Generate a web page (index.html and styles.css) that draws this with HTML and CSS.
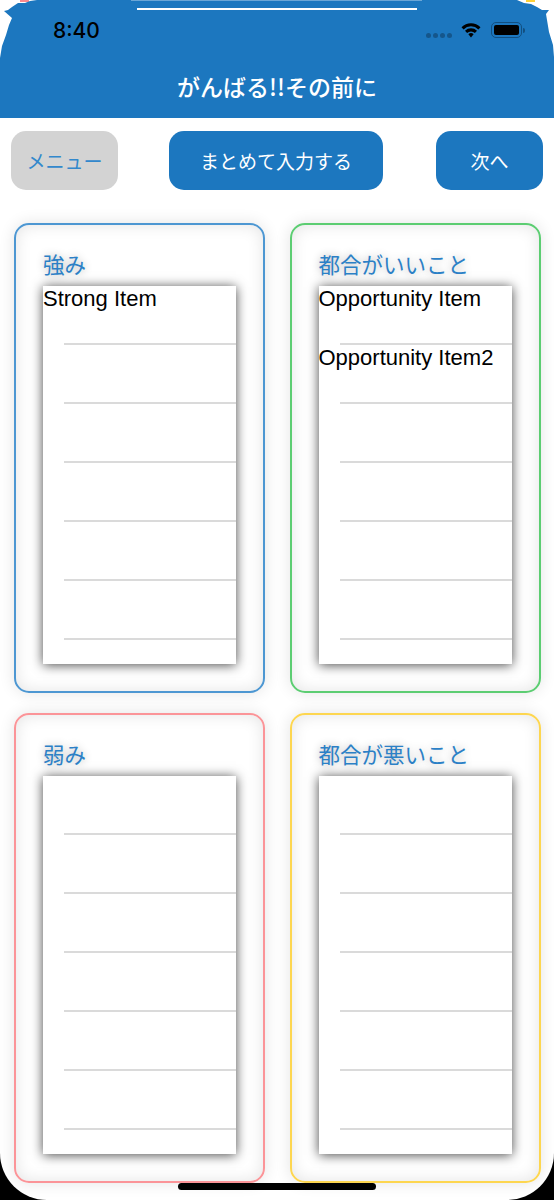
FILE: index.html
```html
<!DOCTYPE html>
<html lang="ja">

<head>
    <meta charset="UTF-8">
    <meta name="viewport" content="width=device-width, initial-scale=1.0">
    <title>がんばる!!その前に</title>
    <link rel="stylesheet" href="styles.css">
</head>

<body>
    <div class="screen">
        <span class="corner-bit corner-bit-pink"></span>
        <span class="corner-bit corner-bit-yellow"></span>

        <!-- Header -->
        <header class="header">
            <div class="top-band"></div>
            <div class="top-line"></div>
            <div class="status-bar">
                <span class="clock">8:40</span>
                <div class="status-icons">
                    <div class="signal-dots"><i></i><i></i><i></i><i></i></div>
                    <svg class="wifi" viewBox="0 0 20 16" width="22" height="16">
                        <path d="M0.5 5.2 A13.5 13.5 0 0 1 19.5 5.2 L17.4 7.4 A10.5 10.5 0 0 0 2.6 7.4 Z" />
                        <path d="M4 8.8 A8.6 8.6 0 0 1 16 8.8 L13.9 11 A5.6 5.6 0 0 0 6.100 11 Z" />
                        <path d="M7.400 12.300 A3.800 3.800 0 0 1 12.600 12.300 L10 15.500 Z" />
                    </svg>
                    <div class="battery"><div class="battery-fill"></div></div>
                    <div class="battery-tip"></div>
                </div>
            </div>
            <h1 class="title">がんばる!!その前に</h1>
        </header>

        <!-- Buttons -->
        <nav class="toolbar">
            <button class="btn btn-menu">メニュー</button>
            <button class="btn btn-bulk">まとめて入力する</button>
            <button class="btn btn-next">次へ</button>
        </nav>

        <!-- Four boxes -->
        <main class="grid">
            <section class="card card-blue">
                <h2 class="card-title">強み</h2>
                <div class="list">
                    <div class="row"><span class="item">Strong Item</span><div class="rule"></div></div>
                    <div class="row"><div class="rule"></div></div>
                    <div class="row"><div class="rule"></div></div>
                    <div class="row"><div class="rule"></div></div>
                    <div class="row"><div class="rule"></div></div>
                    <div class="row"><div class="rule"></div></div>
                </div>
            </section>

            <section class="card card-green">
                <h2 class="card-title">都合がいいこと</h2>
                <div class="list">
                    <div class="row"><span class="item">Opportunity Item</span><div class="rule"></div></div>
                    <div class="row"><span class="item">Opportunity Item2</span><div class="rule"></div></div>
                    <div class="row"><div class="rule"></div></div>
                    <div class="row"><div class="rule"></div></div>
                    <div class="row"><div class="rule"></div></div>
                    <div class="row"><div class="rule"></div></div>
                </div>
            </section>

            <section class="card card-pink">
                <h2 class="card-title">弱み</h2>
                <div class="list">
                    <div class="row"><div class="rule"></div></div>
                    <div class="row"><div class="rule"></div></div>
                    <div class="row"><div class="rule"></div></div>
                    <div class="row"><div class="rule"></div></div>
                    <div class="row"><div class="rule"></div></div>
                    <div class="row"><div class="rule"></div></div>
                </div>
            </section>

            <section class="card card-yellow">
                <h2 class="card-title">都合が悪いこと</h2>
                <div class="list">
                    <div class="row"><div class="rule"></div></div>
                    <div class="row"><div class="rule"></div></div>
                    <div class="row"><div class="rule"></div></div>
                    <div class="row"><div class="rule"></div></div>
                    <div class="row"><div class="rule"></div></div>
                    <div class="row"><div class="rule"></div></div>
                </div>
            </section>
        </main>

        <div class="home-bar"></div>
    </div>
</body>

</html>
```

FILE: styles.css
```css
/* General */
html {
    background-color: #000;
}

body {
    margin: 0;
    font-family: "Noto Sans CJK JP", "Noto Sans", sans-serif;
}

.screen {
    position: relative;
    width: 554px;
    height: 1200px;
    overflow: hidden;
    background-color: #fff;
    border-radius: 0 0 47px 47px;
}

.corner-bit {
    position: absolute;
    top: 0;
    width: 9px;
    height: 2px;
}

.corner-bit-pink {
    left: 20px;
    background-color: #fb8a8e;
}

.corner-bit-yellow {
    left: 526px;
    background-color: #fdd13a;
}

/* Header */
.header {
    position: relative;
    display: flex;
    flex-direction: column;
    height: 118px;
    background-color: #1c77bf;
    clip-path: polygon(0 58px, 2px 46px, 6px 35px, 9px 25px, 12px 18px, 4px 11px, 8px 10px, 12px 7px, 18px 3px, 25px 3px, 30px 1px, 37px 0,
        517px 0, 524px 3px, 531px 4px, 537px 7px, 542px 10px, 549px 10px, 546px 14px, 547px 20px, 549px 32px, 553px 45px, 554px 57px, 554px 118px, 0 118px);
}

.top-band {
    position: absolute;
    top: 0;
    left: 131px;
    width: 291px;
    height: 1px;
    background-color: #6ba6d6;
}

.top-line {
    position: absolute;
    top: 8px;
    left: 137px;
    width: 280px;
    height: 2px;
    background-color: #fff;
}

.status-bar {
    display: flex;
    justify-content: space-between;
    align-items: flex-start;
    padding: 17px 29px 0 53px;
}

.clock {
    font-family: Inter, "Liberation Sans", sans-serif;
    font-size: 21px;
    line-height: 28px;
    font-weight: 500;
    color: #000;
}

.status-icons {
    display: flex;
    align-items: center;
    padding-top: 5px;
}

.signal-dots {
    display: flex;
    gap: 2px;
    margin-top: 11px;
    margin-right: 8px;
}

.signal-dots i {
    width: 5px;
    height: 5px;
    border-radius: 50%;
    background-color: #15568b;
}

.wifi {
    margin-right: 9px;
    fill: #000;
}

.battery {
    box-sizing: border-box;
    width: 31px;
    height: 16px;
    padding: 2px;
    border: 1.500px solid #124f80;
    border-radius: 5px;
}

.battery-fill {
    height: 100%;
    border-radius: 2px;
    background-color: #000;
}

.battery-tip {
    width: 2px;
    height: 5px;
    margin-left: 1px;
    border-radius: 0 2px 2px 0;
    background-color: #124f80;
}

.title {
    margin: 25px 0 0;
    text-align: center;
    font-size: 23px;
    line-height: 32px;
    font-weight: 500;
    color: #fff;
}

/* Buttons */
.toolbar {
    display: flex;
    justify-content: space-between;
    padding: 13px 11px 0;
}

.btn {
    height: 59px;
    padding: 0;
    border: none;
    border-radius: 15px;
    font-family: inherit;
    font-size: 19px;
    color: #fff;
    background-color: #1c77bf;
}

.btn-menu {
    width: 107px;
    color: #3288cc;
    background-color: #d3d3d3;
}

.btn-bulk {
    width: 214px;
    margin-right: 2px;
}

.btn-next {
    width: 107px;
}

/* Four boxes */
.grid {
    display: grid;
    grid-template-columns: 251px 251px;
    grid-auto-rows: 470px;
    column-gap: 24.500px;
    row-gap: 20px;
    padding: 33px 0 0 14px;
}

.card {
    box-sizing: border-box;
    padding: 23px 27px 0;
    border: 2px solid #3a8ccc;
    border-radius: 15px;
    box-shadow: 0 0 16px rgba(0, 0, 0, 0.11), inset 0 0 16px rgba(0, 0, 0, 0.11);
}

.card-blue {
    border-color: #4d97d2;
}

.card-green {
    border-color: #5ccd72;
}

.card-pink {
    border-color: #fb9498;
}

.card-yellow {
    border-color: #fdd650;
}

.card-title {
    margin: 0 0 7px;
    font-size: 21.500px;
    line-height: 31px;
    font-weight: 400;
    color: #2b80c6;
    text-shadow: 0 0 8px rgba(0, 0, 0, 0.3);
}

.list {
    width: 193px;
    height: 378px;
    background-color: #fff;
    box-shadow: 0 1px 11px rgba(0, 0, 0, 0.72);
}

.row {
    display: flex;
    flex-direction: column;
    justify-content: flex-end;
    height: 59px;
}

.item {
    flex: 1;
    font-family: "Liberation Sans", Arial, sans-serif;
    font-size: 22px;
    line-height: 25px;
    color: #000;
}

.rule {
    height: 2px;
    margin-left: 21px;
    background-color: #dadada;
}

.home-bar {
    position: absolute;
    left: 178px;
    top: 1183px;
    width: 198px;
    height: 7px;
    border-radius: 4px;
    background-color: #000;
}
```
